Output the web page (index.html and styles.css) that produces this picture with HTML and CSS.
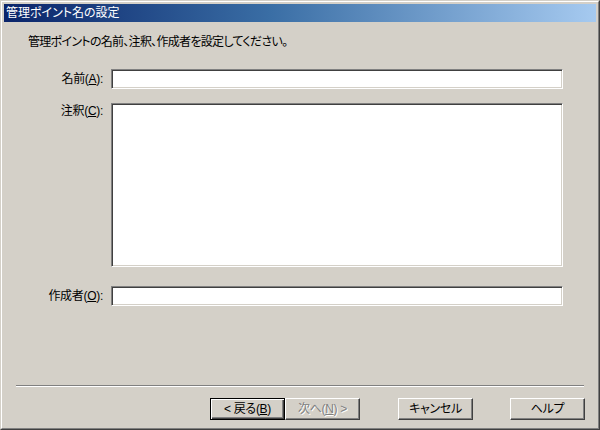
FILE: index.html
```html
<!DOCTYPE html>
<html lang="ja">
<head>
<meta charset="utf-8">
<title>管理ポイント名の設定</title>
<link rel="stylesheet" href="styles.css">
</head>
<body>
<div class="window">
  <div class="frame">
    <div class="titlebar"><span class="title">管理ポイント名の設定</span></div>
    <div class="content">
      <p class="intro">管理ポイントの名前、注釈、作成者を設定してください。</p>
      <div class="form">
        <div class="row row-name">
          <label class="label" for="f-name">名前(<u>A</u>):</label>
          <input class="field" id="f-name" type="text">
        </div>
        <div class="row row-note">
          <label class="label" for="f-note">注釈(<u>C</u>):</label>
          <textarea class="field area" id="f-note"></textarea>
        </div>
        <div class="row row-author">
          <label class="label" for="f-author">作成者(<u>O</u>):</label>
          <input class="field" id="f-author" type="text">
        </div>
      </div>
      <div class="separator"></div>
      <div class="buttons">
        <button class="btn btn-default" type="button">&lt; 戻る(<u>B</u>)</button>
        <button class="btn btn-disabled" type="button" disabled>次へ(<u>N</u>) &gt;</button>
        <button class="btn btn-cancel" type="button">キャンセル</button>
        <button class="btn btn-help" type="button">ヘルプ</button>
      </div>
    </div>
  </div>
</div>
</body>
</html>
```
FILE: styles.css
```css
html, body {
  margin: 0;
  padding: 0;
  background: #d4d0c8;
}

body {
  font-family: "Liberation Sans", "Noto Sans CJK JP", sans-serif;
  font-size: 12px;
  font-feature-settings: "palt";
  color: #000;
}

.window {
  width: 600px;
  height: 430px;
  box-sizing: border-box;
  border: 1px solid;
  border-color: #d4d0c8 #404040 #404040 #d4d0c8;
  background: #d4d0c8;
}

.frame {
  height: 100%;
  box-sizing: border-box;
  border: 1px solid;
  border-color: #ffffff #808080 #808080 #ffffff;
  padding: 2px;
  display: flex;
  flex-direction: column;
}

.titlebar {
  height: 18px;
  flex: none;
  background: linear-gradient(to right, #0a246a 0%, #3a6ea5 45%, #a6caf0 100%);
  color: #fff;
  display: flex;
  align-items: center;
  padding-left: 2px;
}

.title {
  line-height: 18px;
  font-size: 12px;
}

.content {
  flex: 1;
  display: flex;
  flex-direction: column;
}

.intro {
  margin: 12px 0 0 24px;
  line-height: 16px;
  letter-spacing: -0.7px;
}

.form {
  margin-top: 19px;
  display: flex;
  flex-direction: column;
}

.row {
  display: flex;
  column-gap: 8px;
}

.row-name,
.row-author {
  align-items: center;
}

.row-note {
  margin-top: 14px;
  align-items: flex-start;
}

.row-author {
  margin-top: 19px;
}

.label {
  width: 99px;
  flex: none;
  text-align: right;
  line-height: 16px;
  letter-spacing: -0.3px;
}

.field {
  width: 452px;
  height: 20px;
  box-sizing: border-box;
  margin: 0;
  padding: 1px 3px;
  font: inherit;
  background: #fff;
  border: 1px solid;
  border-color: #808080 #ffffff #ffffff #808080;
  box-shadow: inset 1px 1px 0 #404040, inset -1px -1px 0 #d4d0c8;
  outline: none;
  border-radius: 0;
}

.area {
  height: 164px;
  resize: none;
  overflow: hidden;
  display: block;
}

.separator {
  margin: auto 12px 0 12px;
  height: 0;
  border-top: 1px solid #808080;
  border-bottom: 1px solid #ffffff;
}

.buttons {
  margin-top: 11px;
  padding: 0 11px 6px 0;
  display: flex;
  justify-content: flex-end;
}

.btn {
  width: 75px;
  height: 22px;
  box-sizing: border-box;
  margin: 0;
  padding: 0;
  font: inherit;
  color: #000;
  background: #d4d0c8;
  border: 1px solid;
  border-color: #ffffff #404040 #404040 #ffffff;
  box-shadow: inset -1px -1px 0 #808080, inset 1px 1px 0 #d4d0c8;
  border-radius: 0;
  line-height: 18px;
  text-align: center;
  letter-spacing: -0.3px;
}

.btn-default {
  border-color: #000;
  box-shadow: inset 1px 1px 0 #ffffff, inset -1px -1px 0 #404040, inset -2px -2px 0 #808080;
}

.btn-disabled {
  color: #808080;
  text-shadow: 1px 1px 0 #ffffff;
}

.btn-cancel {
  margin-left: 38px;
}

.btn-help {
  margin-left: 37px;
}
```
